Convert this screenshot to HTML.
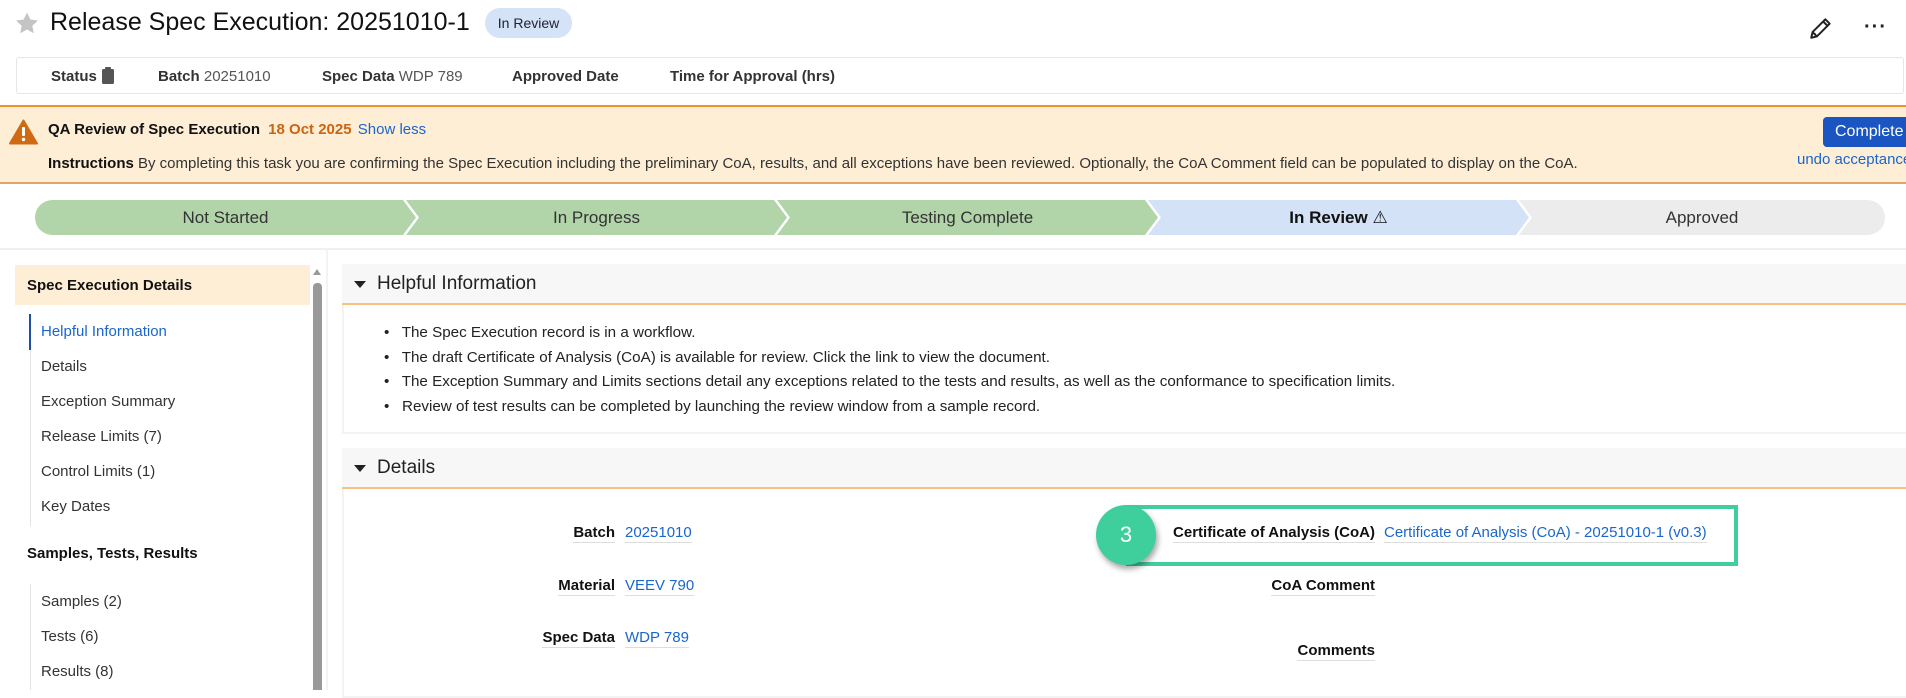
<!DOCTYPE html>
<html><head><meta charset="utf-8"><style>
*{box-sizing:border-box;margin:0;padding:0}
body{width:1906px;height:690px;overflow:hidden;background:#fff;font-family:"Liberation Sans",Arial,sans-serif;color:#222;position:relative}
.a{position:absolute;white-space:nowrap}
.b{font-weight:bold}
.lk{color:#1a66cc}
.step{position:absolute;top:200px;height:35px;display:flex;align-items:center;justify-content:center;font-size:17px;color:#333}
.ul{border-bottom:1px solid #ddd;padding-bottom:1px}
</style></head><body>
<svg class="a" style="left:14px;top:11px" width="26" height="25" viewBox="0 0 24 24"><path d="M12 1.5l3.2 6.7 7.3.9-5.4 5 1.4 7.3L12 17.8 5.5 21.4l1.4-7.3-5.4-5 7.3-.9z" fill="#c4c4c4"/></svg>
<div class="a" style="left:50px;top:8px;font-size:25px;color:#111">Release Spec Execution: 20251010-1</div>
<div class="a" style="left:485px;top:8px;width:87px;height:30px;border-radius:15px;background:#d4e3f8;font-size:14px;line-height:30px;text-align:center;color:#223">In Review</div>
<svg class="a" style="left:1808px;top:15px" width="26" height="26" viewBox="0 0 24 24" fill="none" stroke="#222" stroke-width="1.8" stroke-linejoin="round"><path d="M3 21l1.2-5.2L16 4l4 4L8.2 19.8z M14 6l4 4 M4.2 15.8l4 4 M6 18l1-1"/></svg>
<div class="a" style="left:1864px;top:16px;font-size:20px;font-weight:bold;color:#222;letter-spacing:1px">···</div>
<div class="a" style="left:16px;top:57px;width:1888px;height:37px;border:1px solid #e6e6e6;border-radius:3px"></div>
<div class="a" style="left:51px;top:68px;font-size:15px;color:#333"><span class="b">Status</span></div>
<svg class="a" style="left:101px;top:66px" width="14" height="18" viewBox="0 0 14 18"><rect x="1" y="3" width="12" height="15" rx="1.5" fill="#555"/><rect x="4" y="1" width="6" height="4" rx="1" fill="#555"/></svg>
<div class="a" style="left:158px;top:68px;font-size:15px;color:#555"><span class="b" style="color:#333">Batch</span> 20251010</div>
<div class="a" style="left:322px;top:68px;font-size:15px;color:#555"><span class="b" style="color:#333">Spec Data</span> WDP 789</div>
<div class="a b" style="left:512px;top:68px;font-size:15px;color:#333">Approved Date</div>
<div class="a b" style="left:670px;top:68px;font-size:15px;color:#333">Time for Approval (hrs)</div>
<div class="a" style="left:0;top:105px;width:1906px;height:79px;background:#feeed6;border-top:2px solid #f0912c;border-bottom:2px solid #dfa56a"></div>
<svg class="a" style="left:9px;top:119px" width="29" height="26" viewBox="0 0 29 26"><path d="M14.5 1.5L28 24.5H1z" fill="#cf6a12" stroke="#cf6a12" stroke-width="2" stroke-linejoin="round"/><rect x="13" y="8" width="3" height="9" rx="1" fill="#fff"/><circle cx="14.5" cy="20.5" r="1.7" fill="#fff"/></svg>
<div class="a" style="left:48px;top:121px;font-size:15px"><span class="b" style="color:#111">QA Review of Spec Execution</span> <span class="b" style="color:#cc6410;margin-left:4px">18 Oct 2025</span> <span class="lk" style="margin-left:2px">Show less</span></div>
<div class="a" style="left:48px;top:155px;font-size:15px;color:#333"><span class="b" style="color:#111">Instructions</span> By completing this task you are confirming the Spec Execution including the preliminary CoA, results, and all exceptions have been reviewed. Optionally, the CoA Comment field can be populated to display on the CoA.</div>
<div class="a" style="left:1823px;top:117px;width:90px;height:30px;background:#1b55c2;border-radius:4px;color:#fff;font-size:16px;line-height:30px;padding-left:12px">Complete</div>
<div class="a lk" style="left:1797px;top:151px;font-size:15px">undo acceptance</div>
<div class="step" style="left:35px;width:381px;background:#b2d4a9;border-radius:18px 0 0 18px;clip-path:polygon(0 0,368px 0,100% 50%,368px 100%,0 100%)">Not Started</div>
<div class="step" style="left:406px;width:381px;background:#b2d4a9;clip-path:polygon(0 0,368px 0,100% 50%,368px 100%,0 100%,13px 50%)">In Progress</div>
<div class="step" style="left:777px;width:381px;background:#b2d4a9;clip-path:polygon(0 0,368px 0,100% 50%,368px 100%,0 100%,13px 50%)">Testing Complete</div>
<div class="step" style="left:1148px;width:381px;background:#d3e2f7;clip-path:polygon(0 0,368px 0,100% 50%,368px 100%,0 100%,13px 50%);font-weight:bold;color:#111">In Review&nbsp;<span style="font-weight:normal;font-size:17px">⚠</span></div>
<div class="step" style="left:1519px;width:366px;background:#ececec;border-radius:0 18px 18px 0;clip-path:polygon(0 0,100% 0,100% 100%,0 100%,13px 50%)">Approved</div>
<div class="a" style="left:0;top:248px;width:1906px;height:2px;background:#f0f0f0"></div>
<div class="a" style="left:326px;top:248px;width:2px;height:442px;background:#f3f3f3"></div>
<div class="a" style="left:15px;top:265px;width:295px;height:40px;background:#feeed6"></div>
<div class="a b" style="left:27px;top:277px;font-size:15px;color:#111">Spec Execution Details</div>
<div class="a" style="left:30px;top:314px;width:1px;height:212px;background:#e4e4e4"></div>
<div class="a" style="left:29px;top:314px;width:2px;height:36px;background:#1f4ea8"></div>
<div class="a lk" style="left:41px;top:323px;font-size:15px">Helpful Information</div>
<div class="a" style="left:41px;top:358px;font-size:15px;color:#333">Details</div>
<div class="a" style="left:41px;top:393px;font-size:15px;color:#333">Exception Summary</div>
<div class="a" style="left:41px;top:428px;font-size:15px;color:#333">Release Limits (7)</div>
<div class="a" style="left:41px;top:463px;font-size:15px;color:#333">Control Limits (1)</div>
<div class="a" style="left:41px;top:498px;font-size:15px;color:#333">Key Dates</div>
<div class="a b" style="left:27px;top:545px;font-size:15px;color:#111">Samples, Tests, Results</div>
<div class="a" style="left:30px;top:584px;width:1px;height:106px;background:#e4e4e4"></div>
<div class="a" style="left:41px;top:593px;font-size:15px;color:#333">Samples (2)</div>
<div class="a" style="left:41px;top:628px;font-size:15px;color:#333">Tests (6)</div>
<div class="a" style="left:41px;top:663px;font-size:15px;color:#333">Results (8)</div>
<svg class="a" style="left:312px;top:268px" width="10" height="8"><path d="M1 7L5 1L9 7z" fill="#999"/></svg>
<div class="a" style="left:313px;top:283px;width:9px;height:407px;background:#999;border-radius:4px 4px 0 0"></div>
<div class="a" style="left:342px;top:264px;width:1564px;height:170px;border:2px solid #f3f3f3;border-right:none"></div>
<div class="a" style="left:342px;top:264px;width:1564px;height:41px;background:#f7f7f7;border-bottom:2px solid #f7c27e"></div>
<svg class="a" style="left:354px;top:281px" width="12" height="8"><path d="M0 0H12L6 7z" fill="#222"/></svg>
<div class="a" style="left:377px;top:273px;font-size:19px;color:#222">Helpful Information</div>
<div style="position:absolute;left:384px;top:321px;font-size:15.2px;color:#222;line-height:24.5px">
<div>•&nbsp;&nbsp; The Spec Execution record is in a workflow.</div>
<div>•&nbsp;&nbsp; The draft Certificate of Analysis (CoA) is available for review. Click the link to view the document.</div>
<div>•&nbsp;&nbsp; The Exception Summary and Limits sections detail any exceptions related to the tests and results, as well as the conformance to specification limits.</div>
<div>•&nbsp;&nbsp; Review of test results can be completed by launching the review window from a sample record.</div>
</div>
<div class="a" style="left:342px;top:448px;width:1564px;height:250px;border:2px solid #f3f3f3;border-right:none"></div>
<div class="a" style="left:342px;top:448px;width:1564px;height:41px;background:#f7f7f7;border-bottom:2px solid #f7c27e"></div>
<svg class="a" style="left:354px;top:465px" width="12" height="8"><path d="M0 0H12L6 7z" fill="#222"/></svg>
<div class="a" style="left:377px;top:457px;font-size:19px;color:#222">Details</div>
<div class="a b ul" style="right:1291px;top:524px;font-size:15px;color:#111">Batch</div>
<div class="a lk ul" style="left:625px;top:524px;font-size:15px">20251010</div>
<div class="a b ul" style="right:1291px;top:577px;font-size:15px;color:#111">Material</div>
<div class="a lk ul" style="left:625px;top:577px;font-size:15px">VEEV 790</div>
<div class="a b ul" style="right:1291px;top:629px;font-size:15px;color:#111">Spec Data</div>
<div class="a lk ul" style="left:625px;top:629px;font-size:15px">WDP 789</div>
<div class="a" style="left:1126px;top:505px;width:612px;height:61px;border:4px solid #3ecf9d"></div>
<div class="a b ul" style="right:531px;top:524px;font-size:15px;color:#111">Certificate of Analysis (CoA)</div>
<div class="a lk ul" style="left:1384px;top:524px;font-size:15px">Certificate of Analysis (CoA) - 20251010-1 (v0.3)</div>
<div class="a" style="left:1096px;top:505px;width:60px;height:60px;border-radius:50%;background:#3ecf9d;box-shadow:2px 4px 6px rgba(0,0,0,.35);color:#fff;font-size:22px;line-height:60px;text-align:center">3</div>
<div class="a b ul" style="right:531px;top:577px;font-size:15px;color:#111">CoA Comment</div>
<div class="a b ul" style="right:531px;top:642px;font-size:15px;color:#111">Comments</div>
</body></html>
